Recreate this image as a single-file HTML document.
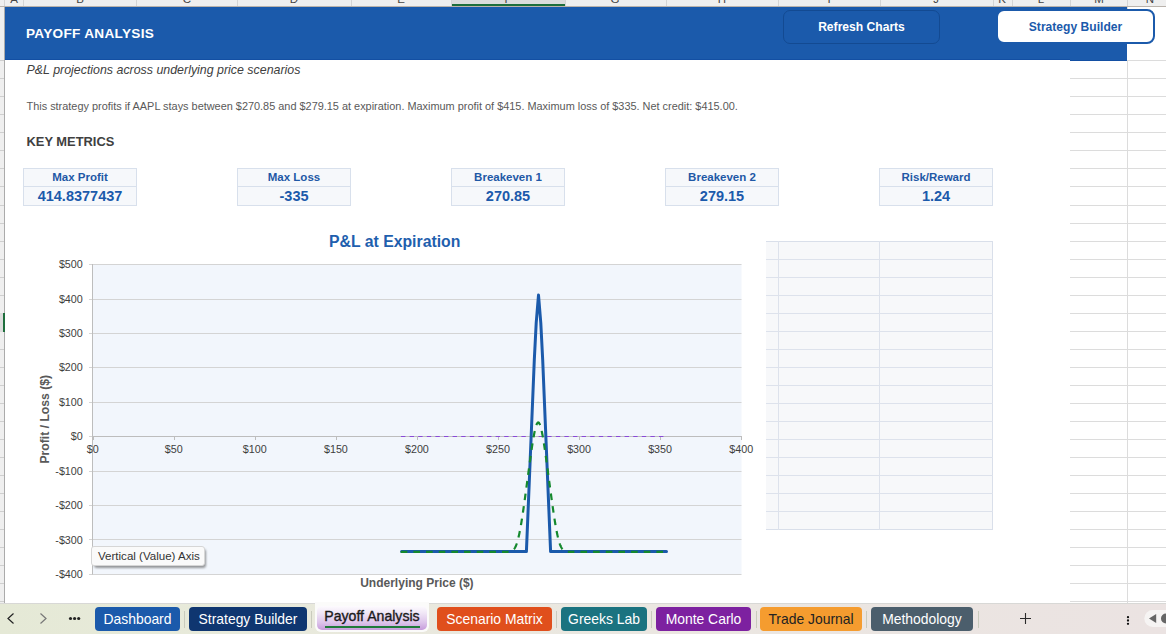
<!DOCTYPE html>
<html><head><meta charset="utf-8">
<style>
*{margin:0;padding:0;box-sizing:border-box}
html,body{width:1166px;height:634px;overflow:hidden;background:#fff;font-family:"Liberation Sans",sans-serif}
.a{position:absolute}
.csep{position:absolute;top:0;width:1px;height:6px;background:#d5d5d5}
.cl{position:absolute;top:-7px;font-size:11.5px;line-height:12px;color:#444;text-align:center;width:20px;margin-left:-10px}
.rt{position:absolute;left:0;width:4px;height:1px;background:#cfcfcf}
.gl{position:absolute;height:1px;background:#dcdcdc}
.gv{position:absolute;width:1px;background:#dcdcdc}
.btn{position:absolute;font-weight:bold;font-size:13px;text-align:center}
.card{position:absolute;width:114px;height:38px;border:1px solid #d8e0ec;background:#f6f8fb}
.card .lb{position:absolute;left:0;top:0;width:100%;height:18px;border-bottom:1px solid #d8e0ec;font-weight:bold;font-size:11.5px;color:#1f58a6;text-align:center;line-height:17px}
.card .vl{position:absolute;left:0;top:18px;width:100%;height:19px;font-weight:bold;font-size:14.5px;color:#1b5aab;text-align:center;line-height:19px}
.tab{position:absolute;top:607px;height:24px;border-radius:4px;color:#fff;font-size:13.9px;line-height:25px;text-align:center;white-space:nowrap}
.tsep{position:absolute;top:611px;width:1px;height:17px;background:#c9cbbd}
</style></head><body>

<div class="a" style="left:0;top:0;width:1166px;height:7px;background:#efefef;border-bottom:1px solid #bab3ac;overflow:hidden">
<div class="a" style="left:451px;top:0;width:114px;height:6px;background:#dcdcdc;border-bottom:2px solid #1e6e3c"></div>
<div class="csep" style="left:4px"></div>
<div class="csep" style="left:23px"></div>
<div class="csep" style="left:136px"></div>
<div class="csep" style="left:237px"></div>
<div class="csep" style="left:351px"></div>
<div class="csep" style="left:451px"></div>
<div class="csep" style="left:565px"></div>
<div class="csep" style="left:666px"></div>
<div class="csep" style="left:778px"></div>
<div class="csep" style="left:880px"></div>
<div class="csep" style="left:993px"></div>
<div class="csep" style="left:1012px"></div>
<div class="csep" style="left:1070px"></div>
<div class="csep" style="left:1127px"></div>
<span class="cl" style="left:14px">A</span>
<span class="cl" style="left:80px">B</span>
<span class="cl" style="left:187px">C</span>
<span class="cl" style="left:294px">D</span>
<span class="cl" style="left:401px">E</span>
<span class="cl" style="left:508px">F</span>
<span class="cl" style="left:615px">G</span>
<span class="cl" style="left:722px">H</span>
<span class="cl" style="left:829px">I</span>
<span class="cl" style="left:936px">J</span>
<span class="cl" style="left:1002px">K</span>
<span class="cl" style="left:1041px">L</span>
<span class="cl" style="left:1099px">M</span>
<span class="cl" style="left:1150px">N</span>
</div>
<div class="a" style="left:0;top:7px;width:5px;height:596px;background:#efefef;border-right:1px solid #ababab"></div>
<div class="rt" style="top:60px"></div>
<div class="rt" style="top:78px"></div>
<div class="rt" style="top:96px"></div>
<div class="rt" style="top:114px"></div>
<div class="rt" style="top:132px"></div>
<div class="rt" style="top:150px"></div>
<div class="rt" style="top:168px"></div>
<div class="rt" style="top:186px"></div>
<div class="rt" style="top:205px"></div>
<div class="rt" style="top:223px"></div>
<div class="rt" style="top:241px"></div>
<div class="rt" style="top:259px"></div>
<div class="rt" style="top:277px"></div>
<div class="rt" style="top:295px"></div>
<div class="rt" style="top:313px"></div>
<div class="rt" style="top:331px"></div>
<div class="rt" style="top:349px"></div>
<div class="rt" style="top:367px"></div>
<div class="rt" style="top:385px"></div>
<div class="rt" style="top:403px"></div>
<div class="rt" style="top:421px"></div>
<div class="rt" style="top:439px"></div>
<div class="rt" style="top:457px"></div>
<div class="rt" style="top:475px"></div>
<div class="rt" style="top:493px"></div>
<div class="rt" style="top:511px"></div>
<div class="rt" style="top:529px"></div>
<div class="rt" style="top:547px"></div>
<div class="rt" style="top:565px"></div>
<div class="rt" style="top:583px"></div>
<div class="rt" style="top:601px"></div>
<div class="a" style="left:3px;top:313px;width:2px;height:19px;background:#1e6e3c"></div>
<div class="a" style="left:0;top:313px;width:3px;height:19px;background:#dcdcdc"></div>
<div class="gl" style="left:1070px;top:78px;width:96px"></div>
<div class="gl" style="left:1070px;top:96px;width:96px"></div>
<div class="gl" style="left:1070px;top:114px;width:96px"></div>
<div class="gl" style="left:1070px;top:132px;width:96px"></div>
<div class="gl" style="left:1070px;top:150px;width:96px"></div>
<div class="gl" style="left:1070px;top:168px;width:96px"></div>
<div class="gl" style="left:1070px;top:186px;width:96px"></div>
<div class="gl" style="left:1070px;top:205px;width:96px"></div>
<div class="gl" style="left:1070px;top:223px;width:96px"></div>
<div class="gl" style="left:1070px;top:241px;width:96px"></div>
<div class="gl" style="left:1070px;top:259px;width:96px"></div>
<div class="gl" style="left:1070px;top:277px;width:96px"></div>
<div class="gl" style="left:1070px;top:295px;width:96px"></div>
<div class="gl" style="left:1070px;top:313px;width:96px"></div>
<div class="gl" style="left:1070px;top:331px;width:96px"></div>
<div class="gl" style="left:1070px;top:349px;width:96px"></div>
<div class="gl" style="left:1070px;top:367px;width:96px"></div>
<div class="gl" style="left:1070px;top:385px;width:96px"></div>
<div class="gl" style="left:1070px;top:403px;width:96px"></div>
<div class="gl" style="left:1070px;top:421px;width:96px"></div>
<div class="gl" style="left:1070px;top:439px;width:96px"></div>
<div class="gl" style="left:1070px;top:457px;width:96px"></div>
<div class="gl" style="left:1070px;top:475px;width:96px"></div>
<div class="gl" style="left:1070px;top:493px;width:96px"></div>
<div class="gl" style="left:1070px;top:511px;width:96px"></div>
<div class="gl" style="left:1070px;top:529px;width:96px"></div>
<div class="gl" style="left:1070px;top:547px;width:96px"></div>
<div class="gl" style="left:1070px;top:565px;width:96px"></div>
<div class="gl" style="left:1070px;top:583px;width:96px"></div>
<div class="gl" style="left:1070px;top:601px;width:96px"></div>
<div class="gl" style="left:1127px;top:60px;width:39px"></div>
<div class="gv" style="left:1127px;top:60px;height:543px"></div>
<div class="gv" style="left:1127px;top:7px;height:3px"></div>
<div class="a" style="left:5px;top:7px;width:1122px;height:53px;background:#1b5aab"></div>
<div class="a" style="left:5px;top:59px;width:1065px;height:1px;background:#134fa3"></div>
<div class="a" style="left:1070px;top:60px;width:57px;height:1px;background:#134fa3"></div>
<div class="a" style="left:26px;top:26px;font-size:13.6px;font-weight:bold;color:#fff;letter-spacing:0.3px;white-space:nowrap">PAYOFF ANALYSIS</div>
<div class="btn" style="left:783px;top:10px;width:157px;height:34px;border:1px solid #134a92;border-radius:7px;color:#fff;line-height:32px;background:#1b5aab;font-size:12.1px">Refresh Charts</div>
<div class="btn" style="left:996px;top:9px;width:159px;height:35px;border:2px solid #1b5aab;border-radius:8px;color:#1b5aab;background:#fff;line-height:33px;font-size:12.1px">Strategy Builder</div>
<div class="a" style="left:26.5px;top:63px;font-size:12.4px;font-style:italic;color:#404040;white-space:nowrap">P&amp;L projections across underlying price scenarios</div>
<div class="a" style="left:26.5px;top:100px;font-size:10.92px;color:#595959;white-space:nowrap">This strategy profits if AAPL stays between $270.85 and $279.15 at expiration. Maximum profit of $415. Maximum loss of $335. Net credit: $415.00.</div>
<div class="a" style="left:26.5px;top:133.5px;font-size:12.9px;font-weight:bold;color:#404040;white-space:nowrap">KEY METRICS</div>
<div class="card" style="left:23px;top:168px"><div class="lb">Max Profit</div><div class="vl">414.8377437</div></div>
<div class="card" style="left:237px;top:168px"><div class="lb">Max Loss</div><div class="vl">-335</div></div>
<div class="card" style="left:451px;top:168px"><div class="lb">Breakeven 1</div><div class="vl">270.85</div></div>
<div class="card" style="left:665px;top:168px"><div class="lb">Breakeven 2</div><div class="vl">279.15</div></div>
<div class="card" style="left:879px;top:168px"><div class="lb">Risk/Reward</div><div class="vl">1.24</div></div>
<div class="a" style="left:766px;top:241px;width:227px;height:289px;background:#f7f8fa;border:1px solid #d9dfea;border-left:none"></div>
<div class="a" style="left:766px;top:259px;width:227px;height:1px;background:#dde2ec"></div>
<div class="a" style="left:766px;top:277px;width:227px;height:1px;background:#dde2ec"></div>
<div class="a" style="left:766px;top:295px;width:227px;height:1px;background:#dde2ec"></div>
<div class="a" style="left:766px;top:313px;width:227px;height:1px;background:#dde2ec"></div>
<div class="a" style="left:766px;top:331px;width:227px;height:1px;background:#dde2ec"></div>
<div class="a" style="left:766px;top:349px;width:227px;height:1px;background:#dde2ec"></div>
<div class="a" style="left:766px;top:367px;width:227px;height:1px;background:#dde2ec"></div>
<div class="a" style="left:766px;top:385px;width:227px;height:1px;background:#dde2ec"></div>
<div class="a" style="left:766px;top:403px;width:227px;height:1px;background:#dde2ec"></div>
<div class="a" style="left:766px;top:421px;width:227px;height:1px;background:#dde2ec"></div>
<div class="a" style="left:766px;top:439px;width:227px;height:1px;background:#dde2ec"></div>
<div class="a" style="left:766px;top:457px;width:227px;height:1px;background:#dde2ec"></div>
<div class="a" style="left:766px;top:475px;width:227px;height:1px;background:#dde2ec"></div>
<div class="a" style="left:766px;top:493px;width:227px;height:1px;background:#dde2ec"></div>
<div class="a" style="left:766px;top:511px;width:227px;height:1px;background:#dde2ec"></div>
<div class="a" style="left:778px;top:241px;width:1px;height:289px;background:#dde2ec"></div>
<div class="a" style="left:879px;top:241px;width:1px;height:289px;background:#dde2ec"></div>
<svg class="a" style="left:0;top:0" width="1166" height="634" font-family="Liberation Sans"><rect x="92" y="264" width="649.5" height="310.5" fill="#f2f6fc"/><line x1="89" y1="264.5" x2="741.5" y2="264.5" stroke="#d4d4d4" stroke-width="1"/><text x="82.8" y="268.10" font-size="10.75" fill="#3e3e3e" text-anchor="end">$500</text><line x1="89" y1="299.5" x2="741.5" y2="299.5" stroke="#d4d4d4" stroke-width="1"/><text x="82.8" y="302.53" font-size="10.75" fill="#3e3e3e" text-anchor="end">$400</text><line x1="89" y1="333.5" x2="741.5" y2="333.5" stroke="#d4d4d4" stroke-width="1"/><text x="82.8" y="336.97" font-size="10.75" fill="#3e3e3e" text-anchor="end">$300</text><line x1="89" y1="367.5" x2="741.5" y2="367.5" stroke="#d4d4d4" stroke-width="1"/><text x="82.8" y="371.40" font-size="10.75" fill="#3e3e3e" text-anchor="end">$200</text><line x1="89" y1="402.5" x2="741.5" y2="402.5" stroke="#d4d4d4" stroke-width="1"/><text x="82.8" y="405.83" font-size="10.75" fill="#3e3e3e" text-anchor="end">$100</text><line x1="89" y1="436.5" x2="741.5" y2="436.5" stroke="#d4d4d4" stroke-width="1"/><text x="82.8" y="440.26" font-size="10.75" fill="#3e3e3e" text-anchor="end">$0</text><line x1="89" y1="471.5" x2="741.5" y2="471.5" stroke="#d4d4d4" stroke-width="1"/><text x="82.8" y="474.70" font-size="10.75" fill="#3e3e3e" text-anchor="end">-$100</text><line x1="89" y1="505.5" x2="741.5" y2="505.5" stroke="#d4d4d4" stroke-width="1"/><text x="82.8" y="509.13" font-size="10.75" fill="#3e3e3e" text-anchor="end">-$200</text><line x1="89" y1="539.5" x2="741.5" y2="539.5" stroke="#d4d4d4" stroke-width="1"/><text x="82.8" y="543.56" font-size="10.75" fill="#3e3e3e" text-anchor="end">-$300</text><line x1="89" y1="574.5" x2="741.5" y2="574.5" stroke="#d4d4d4" stroke-width="1"/><text x="82.8" y="578.00" font-size="10.75" fill="#3e3e3e" text-anchor="end">-$400</text><line x1="92.5" y1="264" x2="92.5" y2="574.5" stroke="#bdbdbd" stroke-width="1"/><line x1="93.5" y1="436" x2="93.5" y2="440" stroke="#bdbdbd" stroke-width="1"/><text x="92.7" y="453" font-size="10.75" fill="#3e3e3e" text-anchor="middle">$0</text><line x1="174.5" y1="436" x2="174.5" y2="440" stroke="#bdbdbd" stroke-width="1"/><text x="173.8" y="453" font-size="10.75" fill="#3e3e3e" text-anchor="middle">$50</text><line x1="255.5" y1="436" x2="255.5" y2="440" stroke="#bdbdbd" stroke-width="1"/><text x="254.8" y="453" font-size="10.75" fill="#3e3e3e" text-anchor="middle">$100</text><line x1="336.5" y1="436" x2="336.5" y2="440" stroke="#bdbdbd" stroke-width="1"/><text x="335.9" y="453" font-size="10.75" fill="#3e3e3e" text-anchor="middle">$150</text><line x1="417.5" y1="436" x2="417.5" y2="440" stroke="#bdbdbd" stroke-width="1"/><text x="416.9" y="453" font-size="10.75" fill="#3e3e3e" text-anchor="middle">$200</text><line x1="498.5" y1="436" x2="498.5" y2="440" stroke="#bdbdbd" stroke-width="1"/><text x="498.0" y="453" font-size="10.75" fill="#3e3e3e" text-anchor="middle">$250</text><line x1="579.5" y1="436" x2="579.5" y2="440" stroke="#bdbdbd" stroke-width="1"/><text x="579.1" y="453" font-size="10.75" fill="#3e3e3e" text-anchor="middle">$300</text><line x1="660.5" y1="436" x2="660.5" y2="440" stroke="#bdbdbd" stroke-width="1"/><text x="660.1" y="453" font-size="10.75" fill="#3e3e3e" text-anchor="middle">$350</text><line x1="741.5" y1="436" x2="741.5" y2="440" stroke="#bdbdbd" stroke-width="1"/><text x="741.2" y="453" font-size="10.75" fill="#3e3e3e" text-anchor="middle">$400</text><line x1="92" y1="436.5" x2="741.5" y2="436.5" stroke="#bdbdbd" stroke-width="1"/><line x1="401" y1="436.5" x2="667" y2="436.5" stroke="#8a4ad8" stroke-width="1" stroke-dasharray="4.4 4.2"/><path d="M401.60,551.60 L526.40,551.60 L534.30,360.00 L536.20,323.00 L538.50,295.00 L540.80,323.00 L542.70,360.00 L550.60,551.60 L666.50,551.60" fill="none" stroke="#1b5aab" stroke-width="3" stroke-linejoin="round" stroke-linecap="round"/><path d="M400.74,551.85 L401.14,551.85 L401.55,551.85 L401.95,551.85 L402.36,551.85 L402.76,551.85 L403.17,551.85 L403.57,551.85 L403.98,551.85 L404.39,551.85 L404.79,551.85 L405.20,551.85 L405.60,551.85 L406.01,551.85 L406.41,551.85 L406.82,551.85 L407.22,551.85 L407.63,551.85 L408.03,551.85 L408.44,551.85 L408.84,551.85 L409.25,551.85 L409.65,551.85 L410.06,551.85 L410.47,551.85 L410.87,551.85 L411.28,551.85 L411.68,551.85 L412.09,551.85 L412.49,551.85 L412.90,551.85 L413.30,551.85 L413.71,551.85 L414.11,551.85 L414.52,551.85 L414.92,551.85 L415.33,551.85 L415.73,551.85 L416.14,551.85 L416.54,551.85 L416.95,551.85 L417.36,551.85 L417.76,551.85 L418.17,551.85 L418.57,551.85 L418.98,551.85 L419.38,551.85 L419.79,551.85 L420.19,551.85 L420.60,551.85 L421.00,551.85 L421.41,551.85 L421.81,551.85 L422.22,551.85 L422.62,551.85 L423.03,551.85 L423.44,551.85 L423.84,551.85 L424.25,551.85 L424.65,551.85 L425.06,551.85 L425.46,551.85 L425.87,551.85 L426.27,551.85 L426.68,551.85 L427.08,551.85 L427.49,551.85 L427.89,551.85 L428.30,551.85 L428.70,551.85 L429.11,551.85 L429.51,551.85 L429.92,551.85 L430.33,551.85 L430.73,551.85 L431.14,551.85 L431.54,551.85 L431.95,551.85 L432.35,551.85 L432.76,551.85 L433.16,551.85 L433.57,551.85 L433.97,551.85 L434.38,551.85 L434.78,551.85 L435.19,551.85 L435.59,551.85 L436.00,551.85 L436.41,551.85 L436.81,551.85 L437.22,551.85 L437.62,551.85 L438.03,551.85 L438.43,551.85 L438.84,551.85 L439.24,551.85 L439.65,551.85 L440.05,551.85 L440.46,551.85 L440.86,551.85 L441.27,551.85 L441.67,551.85 L442.08,551.85 L442.48,551.85 L442.89,551.85 L443.30,551.85 L443.70,551.85 L444.11,551.85 L444.51,551.85 L444.92,551.85 L445.32,551.85 L445.73,551.85 L446.13,551.85 L446.54,551.85 L446.94,551.85 L447.35,551.85 L447.75,551.85 L448.16,551.85 L448.56,551.85 L448.97,551.85 L449.38,551.85 L449.78,551.85 L450.19,551.85 L450.59,551.85 L451.00,551.85 L451.40,551.85 L451.81,551.85 L452.21,551.85 L452.62,551.85 L453.02,551.85 L453.43,551.85 L453.83,551.85 L454.24,551.85 L454.64,551.85 L455.05,551.85 L455.45,551.85 L455.86,551.85 L456.27,551.85 L456.67,551.85 L457.08,551.85 L457.48,551.85 L457.89,551.85 L458.29,551.85 L458.70,551.85 L459.10,551.85 L459.51,551.85 L459.91,551.85 L460.32,551.85 L460.72,551.85 L461.13,551.85 L461.53,551.85 L461.94,551.85 L462.35,551.85 L462.75,551.85 L463.16,551.85 L463.56,551.85 L463.97,551.85 L464.37,551.85 L464.78,551.85 L465.18,551.85 L465.59,551.85 L465.99,551.85 L466.40,551.85 L466.80,551.85 L467.21,551.85 L467.61,551.85 L468.02,551.85 L468.42,551.85 L468.83,551.85 L469.24,551.85 L469.64,551.85 L470.05,551.85 L470.45,551.85 L470.86,551.85 L471.26,551.85 L471.67,551.85 L472.07,551.85 L472.48,551.85 L472.88,551.85 L473.29,551.85 L473.69,551.85 L474.10,551.85 L474.50,551.85 L474.91,551.85 L475.31,551.85 L475.72,551.85 L476.13,551.85 L476.53,551.85 L476.94,551.85 L477.34,551.85 L477.75,551.85 L478.15,551.85 L478.56,551.85 L478.96,551.85 L479.37,551.85 L479.77,551.85 L480.18,551.85 L480.58,551.85 L480.99,551.85 L481.39,551.85 L481.80,551.85 L482.21,551.85 L482.61,551.85 L483.02,551.85 L483.42,551.85 L483.83,551.85 L484.23,551.85 L484.64,551.85 L485.04,551.85 L485.45,551.85 L485.85,551.85 L486.26,551.85 L486.66,551.85 L487.07,551.85 L487.47,551.85 L487.88,551.85 L488.29,551.85 L488.69,551.85 L489.10,551.85 L489.50,551.85 L489.91,551.85 L490.31,551.85 L490.72,551.85 L491.12,551.85 L491.53,551.85 L491.93,551.85 L492.34,551.85 L492.74,551.85 L493.15,551.85 L493.55,551.85 L493.96,551.85 L494.36,551.85 L494.77,551.85 L495.18,551.85 L495.58,551.85 L495.99,551.85 L496.39,551.85 L496.80,551.85 L497.20,551.85 L497.61,551.85 L498.01,551.85 L498.42,551.85 L498.82,551.85 L499.23,551.85 L499.63,551.85 L500.04,551.85 L500.44,551.85 L500.85,551.85 L501.25,551.85 L501.66,551.85 L502.07,551.85 L502.47,551.85 L502.88,551.85 L503.28,551.85 L503.69,551.85 L504.09,551.85 L504.50,551.85 L504.90,551.85 L505.31,551.84 L505.71,551.84 L506.12,551.84 L506.52,551.83 L506.93,551.82 L507.33,551.81 L507.74,551.79 L508.15,551.77 L508.55,551.75 L508.96,551.71 L509.36,551.66 L509.77,551.60 L510.17,551.53 L510.58,551.43 L510.98,551.32 L511.39,551.17 L511.79,550.99 L512.20,550.77 L512.60,550.51 L513.01,550.19 L513.41,549.82 L513.82,549.38 L514.23,548.87 L514.63,548.28 L515.04,547.60 L515.44,546.83 L515.85,545.95 L516.25,544.97 L516.66,543.87 L517.06,542.66 L517.47,541.33 L517.87,539.88 L518.28,538.30 L518.68,536.60 L519.09,534.78 L519.49,532.85 L519.90,530.79 L520.30,528.63 L520.71,526.37 L521.12,524.01 L521.52,521.56 L521.93,519.02 L522.33,516.41 L522.74,513.73 L523.14,510.99 L523.55,508.19 L523.95,505.35 L524.36,502.47 L524.76,499.55 L525.17,496.61 L525.57,493.64 L525.98,490.65 L526.38,487.64 L526.79,484.63 L527.20,481.61 L527.60,478.58 L528.01,475.56 L528.41,472.54 L528.82,469.53 L529.22,466.53 L529.63,463.55 L530.03,460.60 L530.44,457.68 L530.84,454.79 L531.25,451.95 L531.65,449.17 L532.06,446.45 L532.46,443.81 L532.87,441.25 L533.27,438.80 L533.68,436.47 L534.09,434.27 L534.49,432.22 L534.90,430.32 L535.30,428.60 L535.71,427.07 L536.11,425.74 L536.52,424.63 L536.92,423.74 L537.33,423.09 L537.73,422.67 L538.14,422.50 L538.54,422.57 L538.95,422.89 L539.35,423.45 L539.76,424.25 L540.17,425.27 L540.57,426.52 L540.98,427.97 L541.38,429.61 L541.79,431.44 L542.19,433.43 L542.60,435.57 L543.00,437.86 L543.41,440.26 L543.81,442.77 L544.22,445.38 L544.62,448.07 L545.03,450.83 L545.43,453.65 L545.84,456.52 L546.24,459.43 L546.65,462.37 L547.06,465.34 L547.46,468.33 L547.87,471.33 L548.27,474.35 L548.68,477.37 L549.08,480.40 L549.49,483.42 L549.89,486.44 L550.30,489.45 L550.70,492.44 L551.11,495.42 L551.51,498.38 L551.92,501.31 L552.32,504.20 L552.73,507.06 L553.13,509.88 L553.54,512.64 L553.95,515.34 L554.35,517.98 L554.76,520.55 L555.16,523.04 L555.57,525.44 L555.97,527.74 L556.38,529.94 L556.78,532.04 L557.19,534.02 L557.59,535.89 L558.00,537.64 L558.40,539.26 L558.81,540.76 L559.21,542.14 L559.62,543.40 L560.03,544.54 L560.43,545.57 L560.84,546.49 L561.24,547.30 L561.65,548.02 L562.05,548.65 L562.46,549.19 L562.86,549.65 L563.27,550.05 L563.67,550.39 L564.08,550.67 L564.48,550.91 L564.89,551.10 L565.29,551.26 L565.70,551.39 L566.11,551.49 L566.51,551.58 L566.92,551.64 L567.32,551.69 L567.73,551.73 L568.13,551.76 L568.54,551.79 L568.94,551.80 L569.35,551.82 L569.75,551.83 L570.16,551.83 L570.56,551.84 L570.97,551.84 L571.37,551.85 L571.78,551.85 L572.18,551.85 L572.59,551.85 L573.00,551.85 L573.40,551.85 L573.81,551.85 L574.21,551.85 L574.62,551.85 L575.02,551.85 L575.43,551.85 L575.83,551.85 L576.24,551.85 L576.64,551.85 L577.05,551.85 L577.45,551.85 L577.86,551.85 L578.26,551.85 L578.67,551.85 L579.08,551.85 L579.48,551.85 L579.89,551.85 L580.29,551.85 L580.70,551.85 L581.10,551.85 L581.51,551.85 L581.91,551.85 L582.32,551.85 L582.72,551.85 L583.13,551.85 L583.53,551.85 L583.94,551.85 L584.34,551.85 L584.75,551.85 L585.15,551.85 L585.56,551.85 L585.97,551.85 L586.37,551.85 L586.78,551.85 L587.18,551.85 L587.59,551.85 L587.99,551.85 L588.40,551.85 L588.80,551.85 L589.21,551.85 L589.61,551.85 L590.02,551.85 L590.42,551.85 L590.83,551.85 L591.23,551.85 L591.64,551.85 L592.05,551.85 L592.45,551.85 L592.86,551.85 L593.26,551.85 L593.67,551.85 L594.07,551.85 L594.48,551.85 L594.88,551.85 L595.29,551.85 L595.69,551.85 L596.10,551.85 L596.50,551.85 L596.91,551.85 L597.31,551.85 L597.72,551.85 L598.12,551.85 L598.53,551.85 L598.94,551.85 L599.34,551.85 L599.75,551.85 L600.15,551.85 L600.56,551.85 L600.96,551.85 L601.37,551.85 L601.77,551.85 L602.18,551.85 L602.58,551.85 L602.99,551.85 L603.39,551.85 L603.80,551.85 L604.20,551.85 L604.61,551.85 L605.02,551.85 L605.42,551.85 L605.83,551.85 L606.23,551.85 L606.64,551.85 L607.04,551.85 L607.45,551.85 L607.85,551.85 L608.26,551.85 L608.66,551.85 L609.07,551.85 L609.47,551.85 L609.88,551.85 L610.28,551.85 L610.69,551.85 L611.09,551.85 L611.50,551.85 L611.91,551.85 L612.31,551.85 L612.72,551.85 L613.12,551.85 L613.53,551.85 L613.93,551.85 L614.34,551.85 L614.74,551.85 L615.15,551.85 L615.55,551.85 L615.96,551.85 L616.36,551.85 L616.77,551.85 L617.17,551.85 L617.58,551.85 L617.99,551.85 L618.39,551.85 L618.80,551.85 L619.20,551.85 L619.61,551.85 L620.01,551.85 L620.42,551.85 L620.82,551.85 L621.23,551.85 L621.63,551.85 L622.04,551.85 L622.44,551.85 L622.85,551.85 L623.25,551.85 L623.66,551.85 L624.06,551.85 L624.47,551.85 L624.88,551.85 L625.28,551.85 L625.69,551.85 L626.09,551.85 L626.50,551.85 L626.90,551.85 L627.31,551.85 L627.71,551.85 L628.12,551.85 L628.52,551.85 L628.93,551.85 L629.33,551.85 L629.74,551.85 L630.14,551.85 L630.55,551.85 L630.96,551.85 L631.36,551.85 L631.77,551.85 L632.17,551.85 L632.58,551.85 L632.98,551.85 L633.39,551.85 L633.79,551.85 L634.20,551.85 L634.60,551.85 L635.01,551.85 L635.41,551.85 L635.82,551.85 L636.22,551.85 L636.63,551.85 L637.03,551.85 L637.44,551.85 L637.85,551.85 L638.25,551.85 L638.66,551.85 L639.06,551.85 L639.47,551.85 L639.87,551.85 L640.28,551.85 L640.68,551.85 L641.09,551.85 L641.49,551.85 L641.90,551.85 L642.30,551.85 L642.71,551.85 L643.11,551.85 L643.52,551.85 L643.93,551.85 L644.33,551.85 L644.74,551.85 L645.14,551.85 L645.55,551.85 L645.95,551.85 L646.36,551.85 L646.76,551.85 L647.17,551.85 L647.57,551.85 L647.98,551.85 L648.38,551.85 L648.79,551.85 L649.19,551.85 L649.60,551.85 L650.00,551.85 L650.41,551.85 L650.82,551.85 L651.22,551.85 L651.63,551.85 L652.03,551.85 L652.44,551.85 L652.84,551.85 L653.25,551.85 L653.65,551.85 L654.06,551.85 L654.46,551.85 L654.87,551.85 L655.27,551.85 L655.68,551.85 L656.08,551.85 L656.49,551.85 L656.90,551.85 L657.30,551.85 L657.71,551.85 L658.11,551.85 L658.52,551.85 L658.92,551.85 L659.33,551.85 L659.73,551.85 L660.14,551.85 L660.54,551.85 L660.95,551.85 L661.35,551.85 L661.76,551.85 L662.16,551.85 L662.57,551.85 L662.97,551.85 L663.38,551.85 L663.79,551.85 L664.19,551.85 L664.60,551.85 L665.00,551.85 L665.41,551.85 L665.81,551.85 L666.22,551.85 L666.62,551.85 L667.03,551.85 L667.43,551.85 L667.84,551.85 L668.24,551.85" fill="none" stroke="#15892e" stroke-width="2.2" stroke-dasharray="6.6 6.06"/><text x="394.7" y="246.8" font-size="15.8" font-weight="bold" fill="#1f5fae" text-anchor="middle">P&amp;L at Expiration</text><text x="416.9" y="587.4" font-size="12" font-weight="bold" fill="#595959" text-anchor="middle">Underlying Price ($)</text><text transform="translate(48.8,419.2) rotate(-90)" x="0" y="0" font-size="12.2" font-weight="bold" fill="#595959" text-anchor="middle">Profit / Loss ($)</text></svg>
<div class="a" style="left:93.5px;top:548.5px;width:112px;height:19.5px;background:#555;border-radius:3px;opacity:0.6;filter:blur(0.8px)"></div>
<div class="a" style="left:91px;top:546px;width:114px;height:20px;background:#fafafa;border:1px solid #d6d6d6;border-radius:3px;font-size:11.55px;color:#333;line-height:18px;padding-left:6px;white-space:nowrap">Vertical (Value) Axis</div>
<div class="a" style="left:0;top:603px;width:1166px;height:31px;background:linear-gradient(90deg,#e5e9d6 0%,#e8eadb 20%,#ebe7e1 55%,#ebe3e2 100%);border-top:1px solid #d8d8d6"></div>
<svg class="a" style="left:0;top:603px" width="100" height="31"><path d="M13.5,10.5 L8,15.5 L13.5,20.5" fill="none" stroke="#222" stroke-width="1.2"/><path d="M40.5,10.5 L46,15.5 L40.5,20.5" fill="none" stroke="#777" stroke-width="1.2"/><circle cx="70.5" cy="15.5" r="1.6" fill="#222"/><circle cx="74.6" cy="15.5" r="1.6" fill="#222"/><circle cx="78.7" cy="15.5" r="1.6" fill="#222"/></svg>
<div class="tab" style="left:95px;width:85px;background:#1b5aab;color:#fff">Dashboard</div>
<div class="tab" style="left:189px;width:118px;background:#0f3670;color:#fff">Strategy Builder</div>
<div class="tab" style="left:437px;width:115px;background:#e04f1c;color:#fff">Scenario Matrix</div>
<div class="tab" style="left:561px;width:86px;background:#1b7380;color:#fff">Greeks Lab</div>
<div class="tab" style="left:656px;width:95px;background:#7d21a0;color:#fff">Monte Carlo</div>
<div class="tab" style="left:760px;width:102px;background:#f59c2f;color:#222">Trade Journal</div>
<div class="tab" style="left:871px;width:102px;background:#4b5e6c;color:#fff">Methodology</div>
<div class="tsep" style="left:184px"></div>
<div class="tsep" style="left:311px"></div>
<div class="tsep" style="left:556px"></div>
<div class="tsep" style="left:651px"></div>
<div class="tsep" style="left:756px"></div>
<div class="tsep" style="left:866px"></div>
<div class="tsep" style="left:978px"></div>
<div class="a" style="left:315px;top:602px;width:114px;height:29.5px;border-radius:0 0 6px 6px;background:#fbfbfa"></div>
<div class="a" style="left:316.8px;top:605.5px;width:110.5px;height:24.2px;border-radius:5px;background:linear-gradient(180deg,#fdfbfe 0%,#f0e6f6 30%,#dcc3ea 70%,#c69bdb 100%)"></div>
<div class="a" style="left:316px;top:604px;width:112px;height:24px;font-size:14.1px;-webkit-text-stroke:0.35px #1a1a1a;color:#1a1a1a;text-align:center;line-height:24px;white-space:nowrap">Payoff Analysis</div>
<div class="a" style="left:324.5px;top:626px;width:95.5px;height:2px;background:#1f7a3a"></div>
<svg class="a" style="left:1010px;top:603px" width="156" height="31"><path d="M15.5,10 V21 M10,15.5 H21" stroke="#2a2a2a" stroke-width="1.1"/><circle cx="118" cy="14.2" r="1.15" fill="#111"/><circle cx="118" cy="17.5" r="1.15" fill="#111"/><circle cx="118" cy="20.8" r="1.15" fill="#111"/><rect x="134.3" y="7" width="40" height="17" rx="8.5" fill="#f6f4f3"/><path d="M139,15.5 L146.2,11 V20 Z" fill="#666"/><circle cx="156" cy="15.5" r="5" fill="#666"/></svg>
</body></html>
